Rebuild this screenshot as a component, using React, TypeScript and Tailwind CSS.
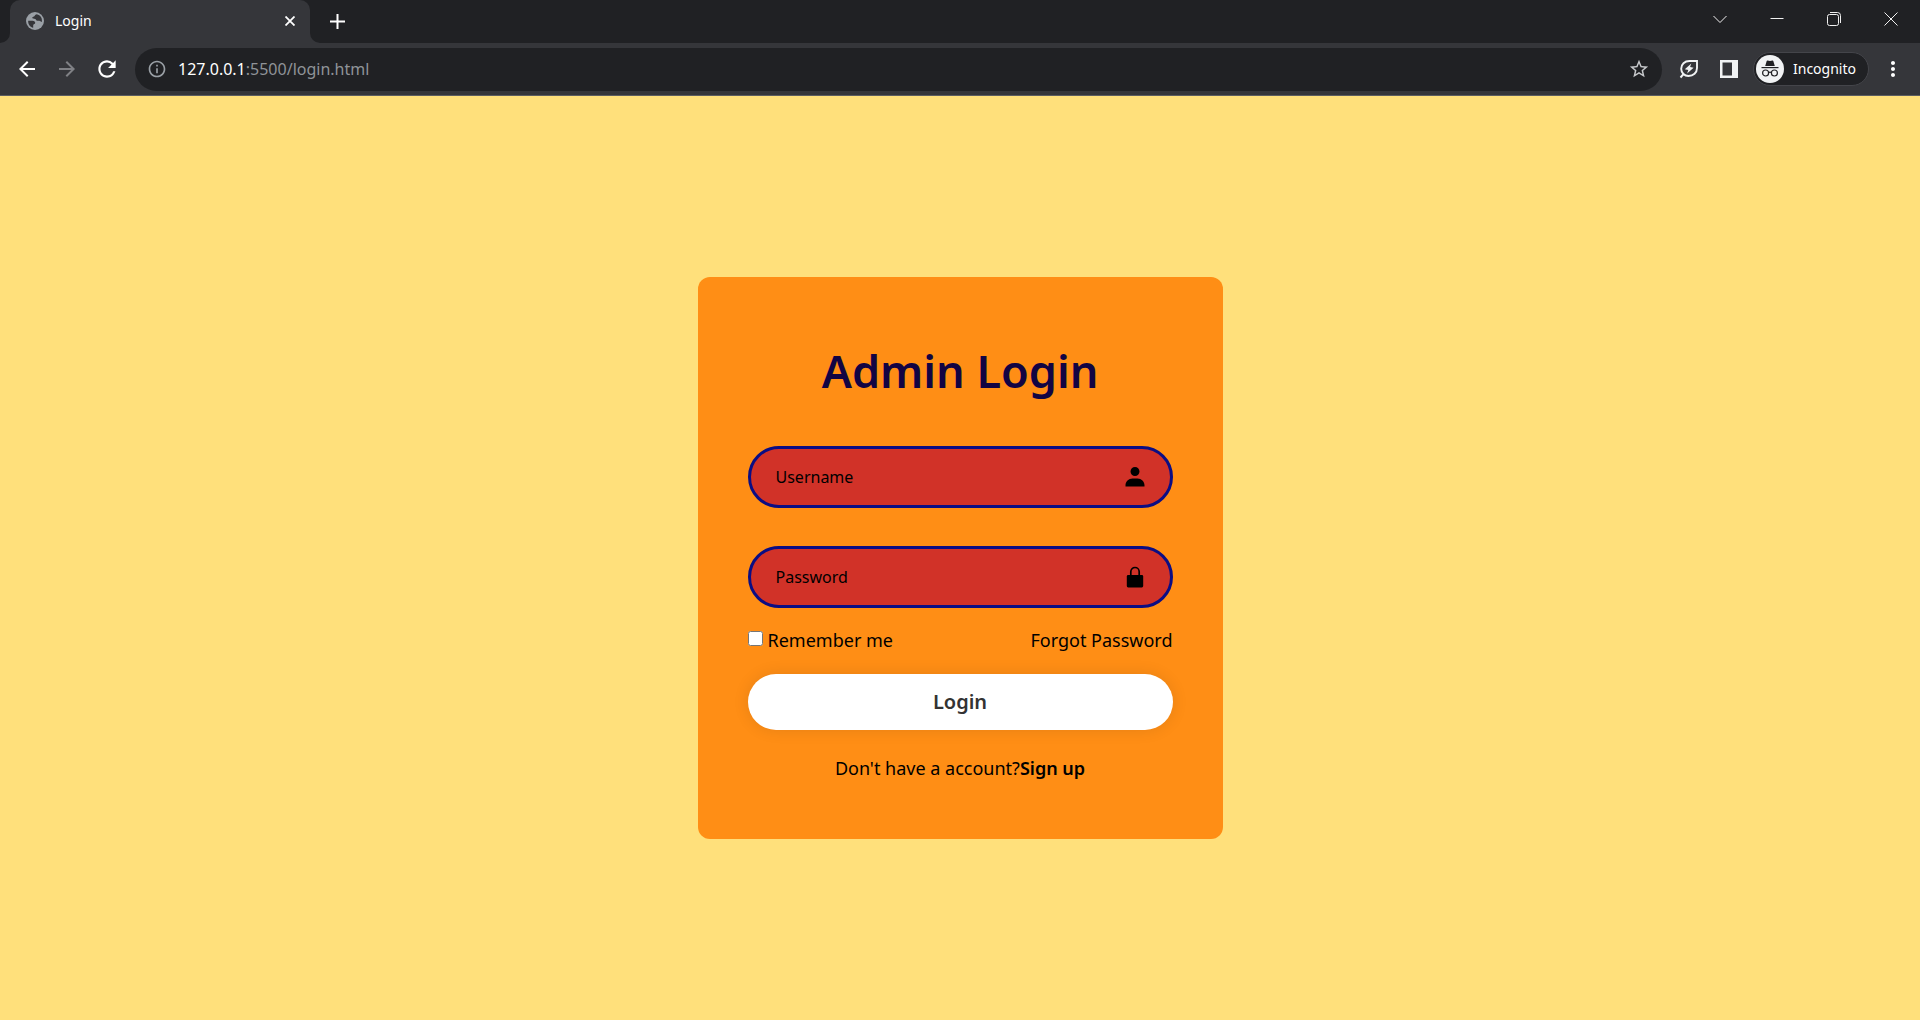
import type { ReactNode } from "react";
import { MdArrowBack, MdArrowForward, MdInfoOutline, MdMoreVert, MdRefresh, MdStarBorder } from "react-icons/md";

function WindowButton({ label, children }: { label: string; children: ReactNode }) {
  return (
    <button type="button" aria-label={label} className="flex h-[38px] w-[57px] items-center justify-center">
      <svg width="14" height="14" viewBox="0 0 14 14" fill="none" stroke="#f1f1f1" strokeWidth="1">
        {children}
      </svg>
    </button>
  );
}

function ToolButton({ label, children }: { label: string; children: ReactNode }) {
  return (
    <button type="button" aria-label={label} className="flex h-10 w-10 items-center justify-center">
      {children}
    </button>
  );
}

function TabFlare({ className }: { className: string }) {
  return (
    <svg aria-hidden="true" className={className} width="10" height="10" viewBox="0 0 10 10">
      <path d="M10 0v10H0A10 10 0 0 0 10 0z" fill="#35363a" />
    </svg>
  );
}

function GlobeIcon() {
  return (
    <svg width="18" height="18" viewBox="0 0 18 18">
      <circle cx="9" cy="9" r="9" fill="#9aa0a6" />
      <path
        d="M10.800 2.300C8.500 2.800 9.300 4.300 7.300 4.700C5.800 5 6 6.300 7.200 6.600L9.200 6.900C10.500 7.200 9.800 8.700 11.300 8.800L13.300 8.700C14.300 8.800 14.600 9.600 15.800 9.900C16.600 6.300 14.400 3 10.800 2.300z"
        fill="#35363a"
      />
      <path
        d="M2.200 8.700H6.500C8.400 8.800 9.300 9.800 9.200 11C9.100 12.200 7.300 12 7.200 13.300V15.700C4 15 1.900 12.200 2.200 8.700z"
        fill="#35363a"
      />
    </svg>
  );
}

function LeafIcon() {
  return (
    <svg width="20" height="20" viewBox="0 0 20 20" fill="none">
      <path
        d="M18 2H10.500C5.500 2 2.200 5.300 2.200 9.700C2.200 14 5.500 17 9.500 17C14.300 17 18 13.800 18 9z"
        stroke="#f1f3f4"
        strokeWidth="1.900"
      />
      <path d="M5 14.500L1.500 18.500" stroke="#f1f3f4" strokeWidth="1.900" />
      <path d="M12.300 4.600L5.800 10.300L9.300 10.900L8.100 14.600L14.600 8.700L11.100 8.100z" fill="#f1f3f4" />
    </svg>
  );
}

function IncognitoBadge() {
  return (
    <svg width="28" height="28" viewBox="0 0 28 28" fill="none">
      <circle cx="14" cy="14" r="14" fill="#f1f3f4" />
      <path d="M9.2 11l1.5-5.1q.2-.6.8-.5l2.5.5 2.5-.5q.6-.1.8.5l1.5 5.1z" fill="#202124" />
      <path d="M5.500 12.6h17" stroke="#202124" strokeWidth="1.2" />
      <circle cx="9.6" cy="18" r="3" stroke="#202124" strokeWidth="1.2" />
      <circle cx="18.4" cy="18" r="3" stroke="#202124" strokeWidth="1.2" />
      <path d="M12.6 17.6q1.4-.9 2.8 0" stroke="#202124" strokeWidth="1.2" />
    </svg>
  );
}

function BrowserChrome() {
  return (
    <header className="font-['Noto_Sans',sans-serif] text-white">
      <div className="flex h-[43px] justify-between bg-[#202124] pr-px pl-[10px]">
        <div className="flex">
          <div className="relative flex w-[300px] items-center rounded-t-[10px] bg-[#35363a] pr-[13px] pb-px pl-4">
            <TabFlare className="absolute bottom-0 -left-[10px]" />
            <TabFlare className="absolute -right-[10px] bottom-0 -scale-x-100" />
            <GlobeIcon />
            <span className="ml-[11px] flex-1 text-[14px] leading-5">Login</span>
            <button type="button" aria-label="Close tab" className="flex h-[14px] w-[14px] items-center justify-center">
              <svg width="10" height="10" viewBox="0 0 10 10" stroke="#fff" strokeWidth="1.8">
                <path d="M0.5 0.5l9 9M9.5 0.5l-9 9" />
              </svg>
            </button>
          </div>
          <button type="button" aria-label="New tab" className="ml-[15px] flex w-6 items-center justify-center">
            <svg width="15" height="15" viewBox="0 0 15 15" stroke="#fff" strokeWidth="2">
              <path d="M7.5 0v15M0 7.5h15" />
            </svg>
          </button>
        </div>
        <div className="flex">
          <WindowButton label="Search tabs">
            <path d="M0.5 4l6.5 6.5L13.5 4" />
          </WindowButton>
          <WindowButton label="Minimize">
            <path d="M0.5 6.5h13" />
          </WindowButton>
          <WindowButton label="Restore">
            <rect x="0.5" y="2.5" width="11" height="11" rx="2" />
            <path d="M3 0.5h7.5a3 3 0 0 1 3 3V11" />
          </WindowButton>
          <WindowButton label="Close">
            <path d="M0.5 0.5l13 13M13.5 0.5l-13 13" />
          </WindowButton>
        </div>
      </div>
      <div className="flex h-[53px] items-center border-b border-[#5c5d60] bg-[#35363a] pr-[7px] pl-[7px]">
        <ToolButton label="Back">
          <MdArrowBack size={24} />
        </ToolButton>
        <ToolButton label="Forward">
          <MdArrowForward size={24} color="#808185" />
        </ToolButton>
        <ToolButton label="Reload">
          <MdRefresh size={26} />
        </ToolButton>
        <div className="ml-2 flex h-[43px] flex-1 items-center rounded-full bg-[#202124] px-3">
          <MdInfoOutline size={20} color="#9aa0a6" />
          <div className="ml-[11px] flex-1 text-[16px] leading-6 text-[#8f9398]">
            <span className="text-white">127.0.0.1</span>:5500/login.html
          </div>
          <button type="button" aria-label="Bookmark this page">
            <MdStarBorder size={22} color="#c7c9cc" />
          </button>
        </div>
        <div className="ml-[7px] flex items-center">
          <ToolButton label="Energy saver">
            <LeafIcon />
          </ToolButton>
          <ToolButton label="Side panel">
            <svg width="18" height="18" viewBox="0 0 18 18">
              <path d="M0 0h18v18H0zM2.5 2.5v13H12v-13z" fill="#f1f3f4" fillRule="evenodd" />
            </svg>
          </ToolButton>
          <button
            type="button"
            className="mr-1 ml-1 flex h-[34px] items-center rounded-full border border-[#44454a] bg-[#202124] pr-3 pl-[2px] text-[14px] leading-5"
          >
            <IncognitoBadge />
            <span className="ml-[9px]">Incognito</span>
          </button>
          <ToolButton label="Menu">
            <MdMoreVert size={24} />
          </ToolButton>
        </div>
      </div>
    </header>
  );
}

function Field({ label, type, icon }: { label: string; type: string; icon: ReactNode }) {
  return (
    <label className="flex h-[62px] items-center rounded-full border-3 border-[#0b0d84] bg-[#d13228] pr-[23px] pl-[25px]">
      <input
        type={type}
        aria-label={label}
        placeholder={label}
        className="min-w-0 flex-1 bg-transparent text-[16px] leading-6 text-black outline-none placeholder:text-black"
      />
      {icon}
    </label>
  );
}

function UserIcon() {
  return (
    <svg width="24" height="24" viewBox="0 0 24 24">
      <path d="M7.5 6.5C7.5 8.98 9.52 11 12 11s4.5-2.02 4.5-4.5S14.48 2 12 2 7.5 4.02 7.5 6.5zM20.5 21.5h1v-1c0-3.86-3.14-7-7-7h-5c-3.86 0-7 3.14-7 7v1z" />
    </svg>
  );
}

function LockIcon() {
  return (
    <svg width="24" height="24" viewBox="0 0 24 24">
      <rect x="3.8" y="10" width="16.4" height="12.4" rx="1.4" />
      <path d="M7.8 10.5V6.7a4.2 4.2 0 0 1 8.4 0v3.8" fill="none" stroke="#000" strokeWidth="1.7" />
    </svg>
  );
}

export default function App() {
  return (
    <div className="flex min-h-screen flex-col bg-[#ffe07b]">
      <BrowserChrome />
      <main className="flex flex-1 items-center justify-center font-['Noto_Sans',sans-serif] text-black">
        <form className="w-full max-w-[525px] rounded-xl bg-[#ff8e15] px-[50px] pt-16 pb-[59px]">
          <h1 className="text-center text-[45px] leading-[60px] font-semibold text-[#120443]">Admin Login</h1>
          <div className="mt-[45px] flex flex-col gap-[38px]">
            <Field label="Username" type="text" icon={<UserIcon />} />
            <Field label="Password" type="password" icon={<LockIcon />} />
          </div>
          <div className="mt-5 flex justify-between text-[18px] leading-6">
            <label className="flex gap-[5px]">
              <input type="checkbox" className="mt-[3px] h-[15px] w-[15px]" />
              Remember me
            </label>
            <a href="#forgot">Forgot Password</a>
          </div>
          <button
            type="submit"
            className="mt-[22px] h-14 w-full rounded-full bg-white text-[20px] leading-7 font-semibold text-[#333] shadow-[0_0_16px_rgba(0,0,0,0.1)]"
          >
            Login
          </button>
          <p className="mt-[26px] text-center text-[18px] leading-6">
            Don't have a account?
            <a href="#signup" className="font-semibold">
              Sign up
            </a>
          </p>
        </form>
      </main>
    </div>
  );
}
